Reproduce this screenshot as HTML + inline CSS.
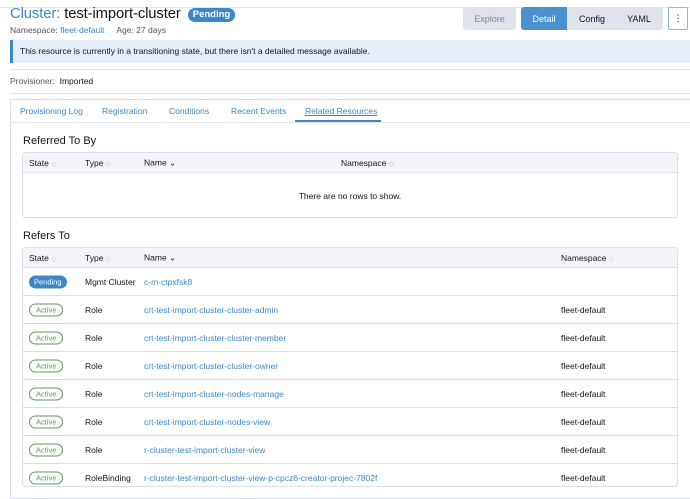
<!DOCTYPE html>
<html><head><style>
*{margin:0;padding:0;box-sizing:border-box}
body{width:690px;height:478px;overflow:hidden;background:#fff;font-family:"Liberation Sans",sans-serif;color:#141419;position:relative;font-size:9px}
.a{position:absolute;white-space:nowrap}
.blue{color:#3d87c8}
.hl{position:absolute;left:10px;right:0;height:1px;background:#dcdee7}
.btn{position:absolute;top:7px;height:23px;font-size:9px;display:flex;align-items:center;justify-content:center}
.tbl{position:absolute;left:22px;width:656px;border:1px solid #dcdee7;border-radius:4px;overflow:hidden}
.th{height:20px;background:#f4f5fa;border-bottom:1px solid #dcdee7;position:relative;font-size:8.5px}
.row{height:28px;border-bottom:1px solid #dcdee7;position:relative;font-size:8.5px}
.c{position:absolute;top:50%;transform:translateY(-50%);white-space:nowrap}
.srt{color:#b8bbc6;font-size:7px}
.act{border:1px solid #5d995d;color:#5d995d;border-radius:8px;font-size:7.5px;padding:1px 6px}
.pend{background:#3d87c8;color:#fff;border-radius:8px;font-size:7.5px;padding:2px 5px}
.dots{color:#3d87c8;font-weight:bold;left:658px}
</style></head><body>
<div class="a" style="left:0;right:0;top:7px;height:1px;background:#e4e6ec"></div>
<div class="a" style="left:10px;top:6px;font-size:14.8px;letter-spacing:-0.1px"><span class="blue">Cluster:</span> test-import-cluster</div>
<div class="a" style="left:188px;top:8px;height:14px;width:47px;background:#3d87c8;color:#fff;border-radius:8px;font-size:9.5px;font-weight:bold;text-align:center;line-height:14px">Pending</div>
<div class="a" style="left:10px;top:25px;font-size:8.5px;color:#555">Namespace: <span class="blue">fleet-default</span>&nbsp;&nbsp;&nbsp;&nbsp;&nbsp;Age: 27 days</div>
<div class="btn" style="left:463px;width:53px;background:#e1e3ea;color:#888;border-radius:3px">Explore</div>
<div class="btn" style="left:521px;width:46px;background:#4b90d0;color:#fff;border-radius:3px 0 0 3px">Detail</div>
<div class="btn" style="left:567px;width:96px;background:#e1e3ea;border-radius:0 3px 3px 0"></div>
<div class="btn" style="left:567px;width:50px">Config</div>
<div class="btn" style="left:617px;width:44px">YAML</div>
<div class="btn" style="left:668px;width:20px;border:1px solid #8db6dd;border-radius:2px;color:#3d87c8;font-weight:bold">⋮</div>
<div class="a" style="left:10px;right:0;top:40px;height:23px;background:#e5eef8;border-left:3px solid #3d87c8;font-size:8.5px;padding:6px 0 0 7px">This resource is currently in a transitioning state, but there isn't a detailed message available.</div>
<div class="hl" style="top:69px"></div>
<div class="a" style="left:10px;top:76px;font-size:8.5px;color:#555">Provisioner:&nbsp; <span style="color:#141419">Imported</span></div>
<div class="hl" style="top:93px"></div>
<div class="a" style="left:10px;top:99px;width:690px;height:400px;border:1px solid #dcdee7"></div>
<div class="a" style="left:11px;top:122px;width:690px;height:1px;background:#e4e6ec"></div>
<div class="a blue" style="left:20px;top:106px;font-size:8.5px">Provisioning Log</div>
<div class="a blue" style="left:102px;top:106px;font-size:8.5px">Registration</div>
<div class="a blue" style="left:169px;top:106px;font-size:8.5px">Conditions</div>
<div class="a blue" style="left:231px;top:106px;font-size:8.5px">Recent Events</div>
<div class="a blue" style="left:305px;top:106px;font-size:8.5px;text-decoration:underline">Related Resources</div>
<div class="a" style="left:295px;top:120px;width:86px;height:2px;background:#3d87c8"></div>
<div class="a" style="left:23px;top:135px;font-size:11px">Referred To By</div>
<div class="tbl" style="top:152px;height:66px">
<div class="th"><span class="c" style="left:6px">State <span class="srt">◇</span></span><span class="c" style="left:62px">Type <span class="srt">◇</span></span><span class="c" style="left:121px">Name ⌄</span><span class="c" style="left:318px">Namespace <span class="srt">◇</span></span></div>
<div style="text-align:center;padding-top:18px;font-size:8.5px">There are no rows to show.</div>
</div>
<div class="a" style="left:23px;top:230px;font-size:11px">Refers To</div>
<div class="tbl" style="top:247px;height:240px">
<div class="th"><span class="c" style="left:6px">State <span class="srt">◇</span></span><span class="c" style="left:62px">Type <span class="srt">◇</span></span><span class="c" style="left:121px">Name ⌄</span><span class="c" style="left:538px">Namespace <span class="srt">◇</span></span></div>
<div class="row"><span class="c pend" style="left:6px">Pending</span><span class="c" style="left:62px">Mgmt Cluster</span><span class="c blue" style="left:121px">c-m-ctpxfsk8</span><span class="c dots">⋮</span></div>
<div class="row"><span class="c act" style="left:6px">Active</span><span class="c" style="left:62px">Role</span><span class="c blue" style="left:121px">crt-test-import-cluster-cluster-admin</span><span class="c" style="left:538px">fleet-default</span><span class="c dots">⋮</span></div>
<div class="row"><span class="c act" style="left:6px">Active</span><span class="c" style="left:62px">Role</span><span class="c blue" style="left:121px">crt-test-import-cluster-cluster-member</span><span class="c" style="left:538px">fleet-default</span><span class="c dots">⋮</span></div>
<div class="row"><span class="c act" style="left:6px">Active</span><span class="c" style="left:62px">Role</span><span class="c blue" style="left:121px">crt-test-import-cluster-cluster-owner</span><span class="c" style="left:538px">fleet-default</span><span class="c dots">⋮</span></div>
<div class="row"><span class="c act" style="left:6px">Active</span><span class="c" style="left:62px">Role</span><span class="c blue" style="left:121px">crt-test-import-cluster-nodes-manage</span><span class="c" style="left:538px">fleet-default</span><span class="c dots">⋮</span></div>
<div class="row"><span class="c act" style="left:6px">Active</span><span class="c" style="left:62px">Role</span><span class="c blue" style="left:121px">crt-test-import-cluster-nodes-view</span><span class="c" style="left:538px">fleet-default</span><span class="c dots">⋮</span></div>
<div class="row"><span class="c act" style="left:6px">Active</span><span class="c" style="left:62px">Role</span><span class="c blue" style="left:121px">r-cluster-test-import-cluster-view</span><span class="c" style="left:538px">fleet-default</span><span class="c dots">⋮</span></div>
<div class="row"><span class="c act" style="left:6px">Active</span><span class="c" style="left:62px">RoleBinding</span><span class="c blue" style="left:121px">r-cluster-test-import-cluster-view-p-cpcz6-creator-projec-7802f</span><span class="c" style="left:538px">fleet-default</span><span class="c dots">⋮</span></div>
</div>
</body></html>
